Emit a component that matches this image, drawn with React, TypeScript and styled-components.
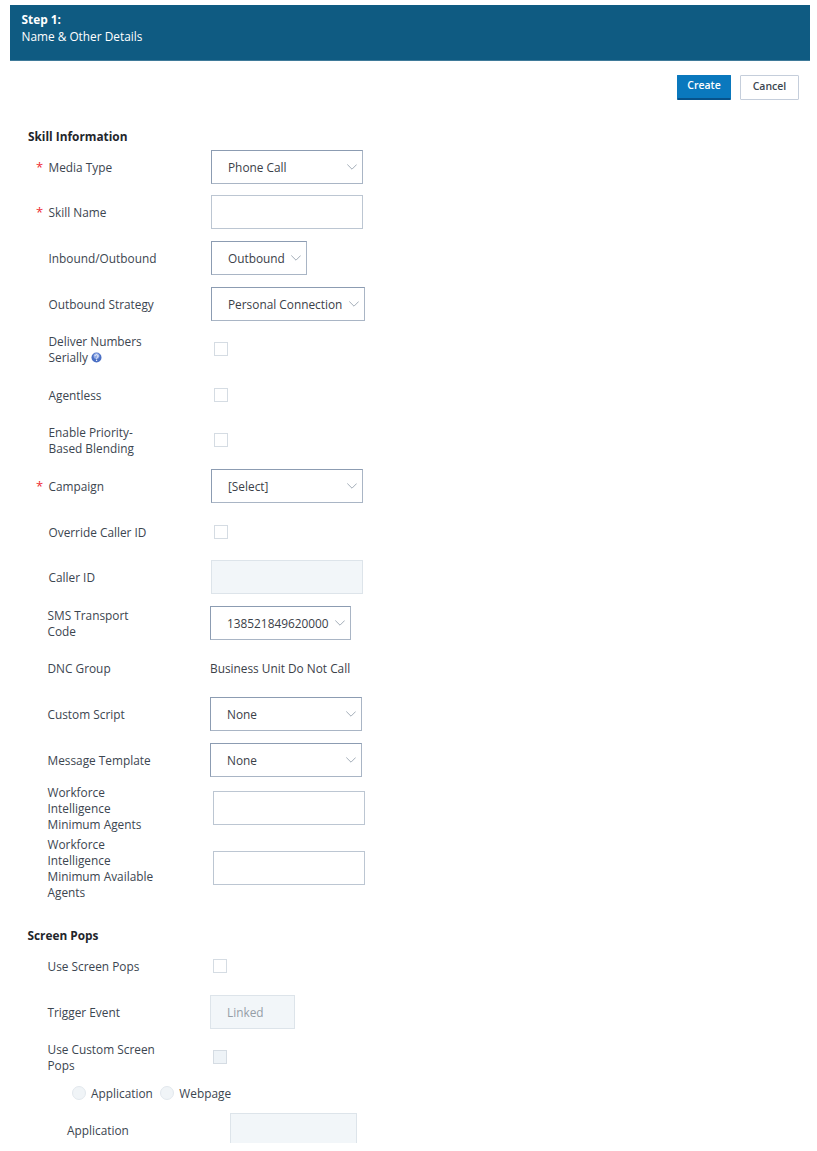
import styled, { createGlobalStyle } from "styled-components";

const GlobalStyle = createGlobalStyle`
  html, body {
    margin: 0;
    padding: 0;
    background: #fff;
  }
  body {
    font-family: "Open Sans", "Noto Sans", sans-serif;
    font-size: 11.85px;
    color: #3c4650;
  }
`;

const Page = styled.div`
  width: 817px;
  height: 1143px;
  overflow: hidden;
  box-sizing: border-box;
  padding-top: 5px;
`;

const StepHeader = styled.header`
  margin-left: 10px;
  width: 800px;
  height: 56px;
  box-sizing: border-box;
  padding: 6px 11.5px;
  background-color: #0f5b82;
  border-bottom: 1px solid #3f7a99;
  color: #fff;
  line-height: 17px;
`;

const StepTitle = styled.div`
  font-weight: 700;
`;

const Toolbar = styled.div`
  display: flex;
  justify-content: flex-end;
  gap: 9px;
  padding: 14px 18px 0 0;
  margin-bottom: 28px;
`;

const Button = styled.button<{ $primary?: boolean }>`
  height: 25px;
  width: ${(p) => (p.$primary ? 54 : 59)}px;
  padding: 0 0 4px;
  box-sizing: border-box;
  font-family: inherit;
  font-size: 10.5px;
  font-weight: 600;
  border-radius: 1px;
  color: ${(p) => (p.$primary ? "#fff" : "#3c4650")};
  background: ${(p) => (p.$primary ? "#0a78bd" : "#fff")};
  border: 1px solid ${(p) => (p.$primary ? "#0a78bd" : "#c5cedb")};
  border-bottom: ${(p) => (p.$primary ? "2px solid #07528a" : "1px solid #c5cedb")};
`;

const SectionTitle = styled.h2<{ $left: number; $top?: number }>`
  margin: ${(p) => p.$top ?? 0}px 0 0;
  padding-left: ${(p) => p.$left}px;
  font-size: 11.85px;
  line-height: 16px;
  font-weight: 700;
  color: #1f262c;
`;

const Row = styled.div<{ $labelAt?: number; $controlAt?: number; $height?: number }>`
  display: grid;
  grid-template-columns: ${(p) => p.$labelAt ?? 48.5}px ${(p) => (p.$controlAt ?? 211) - (p.$labelAt ?? 48.5)}px 1fr;
  align-items: center;
  height: ${(p) => p.$height ?? 45.6}px;
`;

const Star = styled.span`
  padding-left: 36px;
  color: #ee2a32;
  font-size: 13px;
`;

const Label = styled.label`
  display: block;
  max-width: 110px;
  line-height: 16px;
`;

const Select = styled.div<{ $width?: number }>`
  display: flex;
  align-items: center;
  justify-content: space-between;
  box-sizing: border-box;
  width: ${(p) => p.$width ?? 152}px;
  height: 34px;
  padding: 0 5px 0 16px;
  border: 1px solid #8c9cb2;
  border-right-color: #a9b5c5;
  border-bottom-color: #a9b5c5;
  color: #3b4148;
  white-space: nowrap;
`;

const Chevron = styled.svg`
  flex: none;
  width: 10px;
  height: 6px;
  fill: none;
  stroke: #a3adb8;
  stroke-width: 1;
`;

const TextInput = styled.div<{ $width?: number; $disabled?: boolean }>`
  box-sizing: border-box;
  width: ${(p) => p.$width ?? 152}px;
  height: 34px;
  padding-left: 16px;
  line-height: 32px;
  color: #959ea7;
  background: ${(p) => (p.$disabled ? "#f2f6f9" : "#fff")};
  border: 1px solid ${(p) => (p.$disabled ? "#dde4ea" : "#bcc6d2")};
`;

const Checkbox = styled.span<{ $disabled?: boolean }>`
  display: block;
  box-sizing: border-box;
  width: 14px;
  height: 14px;
  margin-left: 3px;
  background: ${(p) => (p.$disabled ? "#eef3f7" : "#fff")};
  border: 1px solid #d5dce3;
`;

const PlainValue = styled.span`
  color: #3b4148;
  white-space: nowrap;
`;

const HelpIcon = styled.svg`
  width: 11px;
  height: 11px;
  margin-left: 3px;
  vertical-align: -1px;
`;

const RadioRow = styled.div`
  display: flex;
  align-items: center;
  height: 24px;
  margin: 1px 0 2px;
  padding-left: 72px;
`;

const Radio = styled.span`
  width: 14px;
  height: 14px;
  margin-right: 5px;
  border-radius: 50%;
  background: #f0f4f7;
  border: 1px solid #e2e8ed;
  box-sizing: border-box;
`;

const RadioText = styled.span`
  margin-right: 7.5px;
`;

const Arrow = () => (
  <Chevron viewBox="0 0 10 6">
    <polyline points="0.3,0.5 5,5.2 9.7,0.5" />
  </Chevron>
);

const App = () => {
  return (
    <Page>
      <GlobalStyle />
      <StepHeader>
        <StepTitle>Step 1:</StepTitle>
        <div>Name &amp; Other Details</div>
      </StepHeader>
      <Toolbar>
        <Button $primary>Create</Button>
        <Button>Cancel</Button>
      </Toolbar>

      <SectionTitle $left={28}>Skill Information</SectionTitle>
      <Row>
        <Star>*</Star>
        <Label>Media Type</Label>
        <Select>
          Phone Call
          <Arrow />
        </Select>
      </Row>
      <Row>
        <Star>*</Star>
        <Label>Skill Name</Label>
        <TextInput />
      </Row>
      <Row>
        <span />
        <Label>Inbound/Outbound</Label>
        <Select $width={96}>
          Outbound
          <Arrow />
        </Select>
      </Row>
      <Row>
        <span />
        <Label>Outbound Strategy</Label>
        <Select $width={154}>
          Personal Connection
          <Arrow />
        </Select>
      </Row>
      <Row>
        <span />
        <Label>
          Deliver Numbers Serially
          <HelpIcon viewBox="0 0 11 11">
            <circle cx="5.5" cy="5.5" r="5" fill="#4a6fc4" />
            <circle cx="5.5" cy="4" r="3" fill="#8fa8e4" />
            <path d="M3.9 4.2c0-2 3.2-2 3.2 0 0 1.1-1.5 1.1-1.5 2.3" fill="none" stroke="#fff" strokeWidth="1" />
            <circle cx="5.6" cy="8.2" r="0.7" fill="#fff" />
          </HelpIcon>
        </Label>
        <Checkbox />
      </Row>
      <Row>
        <span />
        <Label>Agentless</Label>
        <Checkbox />
      </Row>
      <Row>
        <span />
        <Label>Enable Priority-Based Blending</Label>
        <Checkbox />
      </Row>
      <Row>
        <Star>*</Star>
        <Label>Campaign</Label>
        <Select>
          [Select]
          <Arrow />
        </Select>
      </Row>
      <Row>
        <span />
        <Label>Override Caller ID</Label>
        <Checkbox />
      </Row>
      <Row>
        <span />
        <Label>Caller ID</Label>
        <TextInput $disabled />
      </Row>
      <Row $labelAt={47.5} $controlAt={210}>
        <span />
        <Label>SMS Transport Code</Label>
        <Select $width={141}>
          138521849620000
          <Arrow />
        </Select>
      </Row>
      <Row $labelAt={47.5} $controlAt={210}>
        <span />
        <Label>DNC Group</Label>
        <PlainValue>Business Unit Do Not Call</PlainValue>
      </Row>
      <Row $labelAt={47.5} $controlAt={210}>
        <span />
        <Label>Custom Script</Label>
        <Select>
          None
          <Arrow />
        </Select>
      </Row>
      <Row $labelAt={47.5} $controlAt={210}>
        <span />
        <Label>Message Template</Label>
        <Select>
          None
          <Arrow />
        </Select>
      </Row>
      <Row $labelAt={47.5} $controlAt={213} $height={52}>
        <span />
        <Label>Workforce Intelligence Minimum Agents</Label>
        <TextInput />
      </Row>
      <Row $labelAt={47.5} $controlAt={213} $height={68}>
        <span />
        <Label>Workforce Intelligence Minimum Available Agents</Label>
        <TextInput />
      </Row>

      <SectionTitle $left={27.5} $top={25}>
        Screen Pops
      </SectionTitle>
      <Row $labelAt={47.5} $controlAt={210}>
        <span />
        <Label>Use Screen Pops</Label>
        <Checkbox />
      </Row>
      <Row $labelAt={47.5} $controlAt={210}>
        <span />
        <Label>Trigger Event</Label>
        <TextInput $disabled $width={85}>
          Linked
        </TextInput>
      </Row>
      <Row $labelAt={47.5} $controlAt={210}>
        <span />
        <Label>Use Custom Screen Pops</Label>
        <Checkbox $disabled />
      </Row>
      <RadioRow>
        <Radio />
        <RadioText>Application</RadioText>
        <Radio />
        <RadioText>Webpage</RadioText>
      </RadioRow>
      <Row $labelAt={67} $controlAt={230}>
        <span />
        <Label>Application</Label>
        <TextInput $disabled $width={127} />
      </Row>
    </Page>
  );
};

export default App;
